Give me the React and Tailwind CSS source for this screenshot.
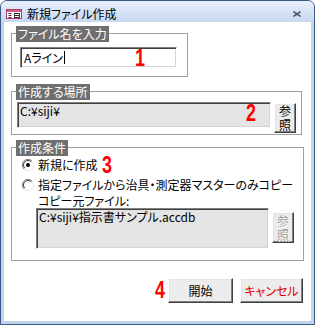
import React from 'react';

const jp = "font-['Noto_Sans_CJK_JP','Noto_Sans_CJK_SC',sans-serif] [font-feature-settings:'palt']";

const Frame = ({ label, className, children }) => (
  <div className={`relative shrink-0 border border-[#a0a0a0] ${className}`}>
    <span className="absolute left-[4px] top-[-8px] h-[16px] px-[2px] bg-[#6f6f6f] text-white text-[12px] leading-[16px] whitespace-nowrap">
      {label}
    </span>
    {children}
  </div>
);

// red annotation digits
const Mark = ({ n, className }) => (
  <span className={`inline-block origin-left scale-x-[0.78] font-['Liberation_Sans',sans-serif] font-bold text-[23px] leading-none text-[#ff0000] ${className}`}>
    {n}
  </span>
);

const Box = ({ className, children }) => (
  <div className={`shrink-0 border border-t-[#808080] border-l-[#808080] border-r-white border-b-white shadow-[inset_1px_1px_0_#404040,inset_-1px_-1px_0_#d4d4d4] ${className}`}>
    {children}
  </div>
);

const Btn = ({ className, children }) => (
  <div className={`shrink-0 flex items-center justify-center bg-[#ececec] border border-t-white border-l-white border-r-[#404040] border-b-[#404040] shadow-[inset_-1px_-1px_0_#808080,inset_1px_1px_0_#e3e3e3] text-[12px] ${className}`}>
    {children}
  </div>
);

const Radio = ({ checked }) => (
  <svg width="12" height="12" viewBox="0 0 12 12" className="shrink-0">
    <circle cx="6" cy="6" r="5.5" fill="#ffffff" />
    <path d="M10 2 A5.6 5.6 0 0 0 2 10" stroke="#808080" fill="none" />
    <path d="M9.2 2.8 A4.5 4.5 0 0 0 2.8 9.2" stroke="#404040" fill="none" />
    <path d="M2 10 A5.6 5.6 0 0 0 10 2" stroke="#e6e6e6" fill="none" />
    {checked && <circle cx="6" cy="6" r="2" fill="#000000" />}
  </svg>
);

function App() {
  return (
    <div className={`w-[315px] h-[325px] bg-white text-black ${jp}`}>
      <div className="w-full h-full flex flex-col rounded-t-[7px] border border-[#3b5a88] bg-[#c0d4ed] overflow-hidden">
        {/* title bar */}
        <div className="h-[21px] shrink-0 flex items-end pl-[5px] pr-[13px] pb-[2px] bg-linear-to-b from-[#e8f0fb] to-[#c6d8f0]">
          <svg width="16" height="10" viewBox="0 0 16 10" className="shrink-0 mb-[1px]">
            <rect x="0.5" y="0.5" width="15" height="9" fill="#ffffff" stroke="#b03a6a" />
            <rect x="1" y="1" width="14" height="2" fill="#d0608a" />
            <path d="M2.5 4.5h3M2.5 6.5h3M2.5 8.5h3" stroke="#333" />
            <rect x="8.5" y="4.5" width="5" height="4" fill="none" stroke="#333" />
            <path d="M8.5 6.5h5" stroke="#333" />
          </svg>
          <span className="ml-[5px] text-[12px] leading-[13px]">新規ファイル作成</span>
          <svg width="8" height="6" viewBox="0 0 8 6" className="ml-auto mb-[3px]">
            <path d="M0.5 0.5 L7.5 5.5 M7.5 0.5 L0.5 5.5" stroke="#4a5870" strokeWidth="1.6" />
          </svg>
        </div>

        {/* body */}
        <div className="flex-1 mx-[3px] mb-[3px] bg-white pl-[7px] pt-[11px] flex flex-col text-[12px]">
          <Frame label="ファイル名を入力" className="w-[177px] h-[44px]">
            <Box className="ml-[8px] mt-[13px] w-[157px] h-[21px] bg-white px-[3px] flex items-center">
              <span className="leading-[14px]">Aライン</span>
              <span className="w-px h-[13px] bg-black ml-[1px]" />
            </Box>
            <Mark n="1" className="absolute left-[123px] top-[13px]" />
          </Frame>

          <Frame label="作成する場所" className="mt-[14px] w-[291px] h-[44px] flex items-start">
            <Box className="ml-[5px] mt-[10px] w-[254px] h-[26px] bg-[#e4e4e4] px-[2px] pt-[1px] leading-[14px]">
              C:¥siji¥
            </Box>
            <Btn className="ml-[3px] mt-[11px] w-[22px] h-[30px]">
              <span className="w-[12px] leading-[14px] text-center">参照</span>
            </Btn>
            <Mark n="2" className="absolute left-[234px] top-[10px]" />
          </Frame>

          <Frame label="作成条件" className="mt-[12px] w-[293px] h-[114px] flex flex-col">
            <div className="mt-[10px] h-[14px] flex items-center pl-[10px]">
              <Radio checked />
              <span className="ml-[4px] leading-[14px]">新規に作成</span>
            </div>
            <div className="mt-[6px] h-[14px] flex items-center pl-[10px]">
              <Radio />
              <span className="ml-[4px] leading-[14px] whitespace-nowrap">指定ファイルから治具・測定器マスターのみコピー</span>
            </div>
            <div className="mt-[3px] h-[12px] leading-[12px] pl-[26px]">コピー元ファイル:</div>
            <div className="mt-[1px] flex items-start">
              <Box className="ml-[24px] w-[233px] h-[41px] bg-[#e4e4e4] px-[2px] pt-[1px] leading-[14px] whitespace-nowrap">
                C:¥siji¥指示書サンプル.accdb
              </Box>
              <Btn className="ml-[3px] mt-[4px] w-[22px] h-[31px] text-[#a0a0a0] [text-shadow:1px_1px_0_#ffffff]">
                <span className="w-[12px] leading-[14px] text-center">参照</span>
              </Btn>
            </div>
            <Mark n="3" className="absolute left-[90px] top-[6px]" />
          </Frame>

          <div className="mt-[17px] flex items-center justify-end pr-[8px]">
            <Mark n="4" />
            <Btn className="w-[65px] h-[25px]">開始</Btn>
            <Btn className="ml-[7px] w-[63px] h-[25px] text-[#e00000]">キャンセル</Btn>
          </div>
        </div>
      </div>
    </div>
  );
}

export default App;
